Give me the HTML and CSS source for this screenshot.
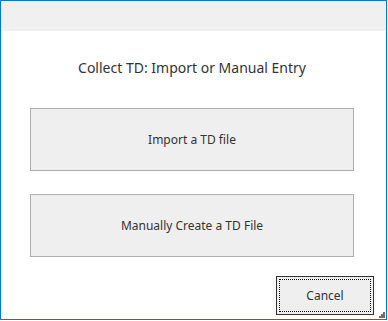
FILE: index.html
```html
<!DOCTYPE html>
<html lang="en">
  <head>
    <meta charset="UTF-8">
    <title>Collect TD</title>
    <link rel="stylesheet" href="styles.css">
  </head>
  <body>
    <div class="window">
      <div class="title-bar"></div>
      <div class="content">
        <p class="prompt">Collect TD: Import or Manual Entry</p>
        <button class="choice">Import a TD file</button>
        <button class="choice">Manually Create a TD File</button>
        <div class="actions">
          <button class="cancel">Cancel</button>
        </div>
      </div>
      <!-- size grip -->
      <svg class="grip" width="6" height="6" viewBox="0 0 6 6">
        <rect x="4" y="0" width="2" height="2" fill="#6d6d6d"/>
        <rect x="2" y="2" width="2" height="2" fill="#6d6d6d"/>
        <rect x="4" y="2" width="2" height="2" fill="#6d6d6d"/>
        <rect x="0" y="4" width="2" height="2" fill="#6d6d6d"/>
        <rect x="2" y="4" width="2" height="2" fill="#6d6d6d"/>
        <rect x="4" y="4" width="2" height="2" fill="#6d6d6d"/>
      </svg>
    </div>
  </body>
</html>
```

FILE: styles.css
```css
body {
  margin: 0;
  background: #ffffff;
  font-family: "Noto Sans", "Open Sans", sans-serif;
  color: #333333;
}

.window {
  position: relative;
  width: 387px;
  height: 320px;
  box-sizing: border-box;
  border: 1px solid #0078d7;
  background: #ffffff;
}

.title-bar {
  height: 30px;
  background: #f0f0f0;
}

.content {
  display: flex;
  flex-direction: column;
  padding: 0 32px 0 29px;
}

.prompt {
  margin: 25px 0 0;
  height: 52px;
  text-align: center;
  font-size: 14px;
  line-height: 24px;
}

.choice {
  height: 63px;
  margin-bottom: 23px;
  border: 1px solid #adadad;
  background: #efefef;
  font-family: inherit;
  font-size: 12px;
  color: #333333;
  padding: 0;
}

.actions {
  display: flex;
  justify-content: flex-end;
  margin-top: -4px;
  margin-right: -20px;
}

.cancel {
  width: 98px;
  height: 39px;
  border: 1px solid #333333;
  background: #efefef;
  font-family: inherit;
  font-size: 12px;
  color: #333333;
  padding: 0;
  outline: 1px dotted #000000;
  outline-offset: -4px;
}

.grip {
  position: absolute;
  right: 1px;
  bottom: 1px;
}
```
